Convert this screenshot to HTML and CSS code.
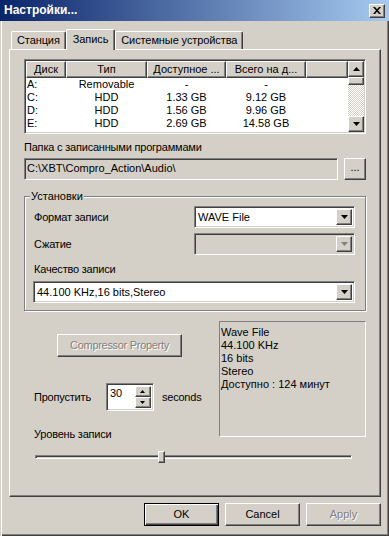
FILE: index.html
```html
<!DOCTYPE html>
<html lang="ru">
<head>
  <meta charset="UTF-8">
  <meta name="viewport" content="width=device-width, initial-scale=1.0">
  <title>Настройки...</title>
  <link rel="stylesheet" href="styles.css">
</head>
<body>
<div class="window">
  <div class="titlebar">
    <span class="title">Настройки...</span>
    <span class="close-btn">
      <svg width="8" height="7" viewBox="0 0 8 7"><path d="M0 0h2l2 2.3 2-2.3h2l-3 3.5 3 3.5h-2l-2-2.3-2 2.3h-2l3-3.5z" fill="#000"/></svg>
    </span>
  </div>

  <div class="frame">
    <div class="tabs">
      <div class="tab">Станция</div>
      <div class="tab active">Запись</div>
      <div class="tab">Системные устройства</div>
    </div>

    <div class="panel">
      <!-- drives -->
      <div class="list">
        <div class="list-body">
          <div class="list-head">
            <div class="hcell c1">Диск</div>
            <div class="hcell c2">Тип</div>
            <div class="hcell c3">Доступное ...</div>
            <div class="hcell c4">Всего на д...</div>
            <div class="hcell c5"></div>
          </div>
          <div class="list-row"><span class="c1">A:</span><span class="c2">Removable</span><span class="c3">-</span><span class="c4">-</span></div>
          <div class="list-row"><span class="c1">C:</span><span class="c2">HDD</span><span class="c3">1.33 GB</span><span class="c4">9.12 GB</span></div>
          <div class="list-row"><span class="c1">D:</span><span class="c2">HDD</span><span class="c3">1.56 GB</span><span class="c4">9.96 GB</span></div>
          <div class="list-row"><span class="c1">E:</span><span class="c2">HDD</span><span class="c3">2.69 GB</span><span class="c4">14.58 GB</span></div>
        </div>
        <div class="vscroll">
          <div class="raised sbtn"><svg width="7" height="4" viewBox="0 0 7 4"><path d="M3.5 0L7 4H0z"/></svg></div>
          <div class="raised sthumb"></div>
          <div class="strack"></div>
          <div class="raised sbtn"><svg width="7" height="4" viewBox="0 0 7 4"><path d="M0 0h7L3.5 4z"/></svg></div>
        </div>
      </div>

      <div class="label folder-label">Папка с записанными программами</div>
      <div class="folder-row">
        <div class="sunken edit readonly">C:\XBT\Compro_Action\Audio\</div>
        <div class="raised btn browse">...</div>
      </div>

      <fieldset class="group">
        <legend>Установки</legend>
        <div class="field-row">
          <span class="label">Формат записи</span>
          <div class="sunken combo short">
            <span class="combo-text">WAVE File</span>
            <span class="raised combo-btn"><svg width="7" height="4" viewBox="0 0 7 4"><path d="M0 0h7L3.5 4z"/></svg></span>
          </div>
        </div>
        <div class="field-row gap">
          <span class="label">Сжатие</span>
          <div class="sunken combo short disabled">
            <span class="combo-text"></span>
            <span class="raised combo-btn"><svg width="7" height="4" viewBox="0 0 7 4"><path d="M0 0h7L3.5 4z"/></svg></span>
          </div>
        </div>
        <div class="label quality-label">Качество записи</div>
        <div class="sunken combo wide">
          <span class="combo-text">44.100 KHz,16 bits,Stereo</span>
          <span class="raised combo-btn"><svg width="7" height="4" viewBox="0 0 7 4"><path d="M0 0h7L3.5 4z"/></svg></span>
        </div>
      </fieldset>

      <div class="lower">
        <div class="lower-left">
          <div class="raised btn compressor disabled-text">Compressor Property</div>
          <div class="spin-row">
            <span class="label">Пропустить</span>
            <div class="sunken spin">
              <span class="spin-text">30</span>
              <span class="spin-btns">
                <span class="raised spin-btn"><svg width="5" height="3" viewBox="0 0 5 3"><path d="M2.5 0L5 3H0z"/></svg></span>
                <span class="raised spin-btn"><svg width="5" height="3" viewBox="0 0 5 3"><path d="M0 0h5L2.5 3z"/></svg></span>
              </span>
            </div>
            <span class="label">seconds</span>
          </div>
          <div class="label level-label">Уровень записи</div>
        </div>
        <div class="info">
          <div>Wave File</div>
          <div>44.100 KHz</div>
          <div>16 bits</div>
          <div>Stereo</div>
          <div>Доступно : 124 минут</div>
        </div>
      </div>

      <div class="slider">
        <div class="slider-track"></div>
        <div class="raised slider-thumb" style="left: 38.8%"></div>
      </div>
    </div>

    <div class="buttons">
      <div class="raised btn dlg default">OK</div>
      <div class="raised btn dlg">Cancel</div>
      <div class="raised btn dlg disabled-text">Apply</div>
    </div>
  </div>
</div>
</body>
</html>
```

FILE: styles.css
```css
* {
  box-sizing: border-box;
}
body {
  margin: 0;
  background: #d4d0c8;
  font-family: "Liberation Sans", Arial, sans-serif;
  font-size: 11px;
  line-height: 13px;
  color: #000;
}
.window {
  width: 389px;
  height: 536px;
  display: flex;
  flex-direction: column;
  background: #d4d0c8;
}

/* common 3d borders */
.raised {
  background: #d4d0c8;
  border: 1px solid;
  border-color: #fff #404040 #404040 #fff;
  box-shadow: inset -1px -1px #808080;
}
.sunken {
  border: 1px solid;
  border-color: #808080 #fff #fff #808080;
  box-shadow: inset 1px 1px #404040, inset -1px -1px #d4d0c8;
}
.disabled-text {
  color: #808080;
  text-shadow: 1px 1px #fff;
}
.label {
  letter-spacing: -0.2px;
}

/* title */
.titlebar {
  height: 21px;
  flex: none;
  display: flex;
  align-items: center;
  justify-content: space-between;
  padding: 0 4px;
  background: linear-gradient(to right, #0a246a, #a6caf0);
}
.title {
  color: #fff;
  font-weight: bold;
  font-size: 12px;
}
.close-btn {
  width: 16px;
  height: 14px;
  display: flex;
  align-items: center;
  justify-content: center;
  background: #d4d0c8;
  border: 1px solid;
  border-color: #fff #404040 #404040 #fff;
  box-shadow: inset -1px -1px #808080;
}

.frame {
  flex: 1;
  display: flex;
  flex-direction: column;
  padding: 8px 8px 10px 9px;
  box-shadow: inset 1px 0 #d4d0c8, inset 2px 0 #fff, inset -1px -1px #404040, inset -2px -2px #808080;
}

/* tabs */
.tabs {
  height: 20px;
  display: flex;
  align-items: flex-end;
  padding-left: 2px;
}
.tab {
  height: 18px;
  padding: 0 5px;
  display: flex;
  align-items: center;
  border: 1px solid;
  border-bottom: none;
  border-color: #fff #404040 #404040 #fff;
  border-radius: 2px 2px 0 0;
  box-shadow: inset -1px 0 #808080;
  letter-spacing: -0.1px;
}
.tab.active {
  height: 21px;
  margin-bottom: -1px;
  padding: 0 6px 2px;
  position: relative;
  z-index: 1;
  background: #d4d0c8;
}

.panel {
  height: 448px;
  padding: 9px 14px 0 14px;
  border: 1px solid;
  border-color: #fff #404040 #404040 #fff;
  box-shadow: inset -1px -1px #808080;
}

/* list view */
.list {
  height: 75px;
  display: flex;
  background: #fff;
  border: 1px solid;
  border-color: #808080 #fff #fff #808080;
  box-shadow: inset 1px 1px #404040, inset -1px -1px #d4d0c8;
  padding: 1px;
}
.list-body {
  flex: 1;
  overflow: hidden;
}
.list-head {
  display: flex;
  height: 17px;
}
.hcell {
  display: flex;
  align-items: center;
  justify-content: center;
  background: #d4d0c8;
  border: 1px solid;
  border-color: #fff #404040 #404040 #fff;
  box-shadow: inset -1px -1px #808080;
  white-space: nowrap;
  overflow: hidden;
}
.c1 { width: 40px; }
.c2 { width: 81px; }
.c3 { width: 79px; }
.c4 { width: 80px; }
.hcell.c5 { flex: 1; }
.list-row {
  display: flex;
  height: 13px;
  white-space: nowrap;
}
.list-row span {
  text-align: center;
}
.list-row .c1 {
  text-align: left;
  padding-left: 1px;
}
.vscroll {
  width: 16px;
  display: flex;
  flex-direction: column;
}
.sbtn {
  height: 16px;
  display: flex;
  align-items: center;
  justify-content: center;
}
.sthumb {
  height: 8px;
}
.strack {
  flex: 1;
  background: repeating-conic-gradient(#fff 0 25%, #d4d0c8 0 50%) 0 0 / 2px 2px;
}

/* folder */
.folder-label {
  margin-top: 7px;
}
.folder-row {
  display: flex;
  gap: 6px;
  margin-top: 4px;
  height: 22px;
}
.edit {
  flex: 1;
  padding: 3px 2px;
}
.readonly {
  background: #d4d0c8;
}
.browse {
  width: 22px;
  display: flex;
  align-items: flex-end;
  justify-content: center;
  padding-bottom: 4px;
}

/* settings group */
.group {
  margin: 10px 0 0;
  padding: 3px 10px 7px 8px;
  border: 1px solid #808080;
  box-shadow: 1px 1px #fff, inset 1px 1px #fff;
  min-inline-size: 0;
}
.group legend {
  margin-left: -3px;
  padding: 0 1px;
  background: #d4d0c8;
  line-height: 13px;
}
.field-row {
  display: flex;
  align-items: center;
  justify-content: space-between;
  padding-left: 1px;
}
.field-row.gap {
  margin-top: 5px;
}
.combo {
  height: 22px;
  display: flex;
  padding: 2px;
  background: #fff;
}
.combo.short {
  width: 161px;
}
.combo.disabled {
  background: #d4d0c8;
}
.combo.disabled svg {
  fill: #808080;
}
.combo-text {
  flex: 1;
  display: flex;
  align-items: center;
  padding-left: 1px;
}
.combo-btn {
  width: 16px;
  display: flex;
  align-items: center;
  justify-content: center;
}
.quality-label {
  margin-top: 8px;
  padding-left: 1px;
}
.combo.wide {
  margin-top: 5px;
}

/* lower part */
.lower {
  display: flex;
  justify-content: space-between;
  margin-top: 10px;
}
.lower-left {
  display: flex;
  flex-direction: column;
  padding-left: 10px;
}
.btn {
  display: flex;
  align-items: center;
  justify-content: center;
}
.compressor {
  width: 125px;
  height: 23px;
  margin: 13px 0 0 23px;
  letter-spacing: -0.3px;
}
.spin-row {
  display: flex;
  align-items: center;
  margin-top: 26px;
}
.spin {
  width: 48px;
  height: 28px;
  margin: 0 8px 0 15px;
  display: flex;
  padding: 2px;
  background: #fff;
}
.spin-text {
  flex: 1;
  padding: 1px 1px;
}
.spin-btns {
  width: 16px;
  display: flex;
  flex-direction: column;
}
.spin-btn {
  flex: 1;
  display: flex;
  align-items: center;
  justify-content: center;
}
.level-label {
  margin-top: 17px;
}
.info {
  width: 147px;
  height: 116px;
  padding: 4px 1px;
  border: 1px solid;
  border-color: #808080 #fff #fff #808080;
}

.slider {
  position: relative;
  height: 12px;
  width: 317px;
  margin: 10px 0 0 11px;
  display: flex;
  align-items: center;
}
.slider-track {
  flex: 1;
  height: 4px;
  border: 1px solid;
  border-color: #808080 #fff #fff #808080;
  box-shadow: inset 1px 1px #404040;
}
.slider-thumb {
  position: absolute;
  top: 0;
  width: 7px;
  height: 12px;
}

/* dialog buttons */
.buttons {
  display: flex;
  justify-content: flex-end;
  gap: 6px;
  margin-top: 6px;
}
.dlg {
  width: 75px;
  height: 23px;
}
.dlg.default {
  border: 1px solid #000;
  box-shadow: inset 1px 1px #fff, inset -1px -1px #404040, inset -2px -2px #808080;
}
```
